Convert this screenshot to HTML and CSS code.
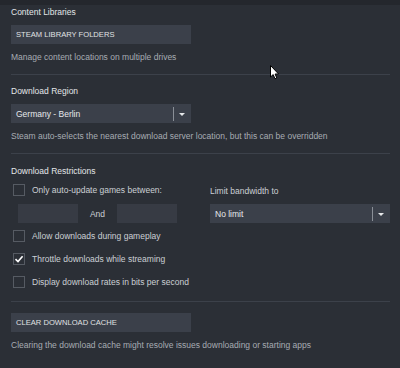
FILE: index.html
```html
<!DOCTYPE html>
<html lang="en">
<head>
  <meta charset="UTF-8">
  <title>Steam Settings - Downloads</title>
  <link rel="stylesheet" href="styles.css">
</head>
<body>
  <div class="topband"></div>
  <div class="page">
    <div class="section">
      <div class="heading">Content Libraries</div>
      <button class="btn">STEAM LIBRARY FOLDERS</button>
      <div class="desc">Manage content locations on multiple drives</div>
    </div>
    <div class="sep"></div>

    <div class="section">
      <div class="heading">Download Region</div>
      <div class="dropdown">
        <span class="value">Germany - Berlin</span>
        <span class="divider"></span>
        <span class="arrow"></span>
      </div>
      <div class="desc">Steam auto-selects the nearest download server location, but this can be overridden</div>
    </div>
    <div class="sep"></div>

    <div class="section">
      <div class="heading heading-r">Download Restrictions</div>
      <div class="restrict">
        <div class="left">
          <label class="check"><span class="box"></span>Only auto-update games between:</label>
          <div class="times">
            <span class="field"></span>
            <span class="and">And</span>
            <span class="field"></span>
          </div>
        </div>
        <div class="right">
          <div class="label">Limit bandwidth to</div>
          <div class="dropdown wide">
            <span class="value">No limit</span>
            <span class="divider"></span>
            <span class="arrow"></span>
          </div>
        </div>
      </div>
      <label class="check"><span class="box"></span>Allow downloads during gameplay</label>
      <label class="check"><span class="box checked">
        <svg width="10" height="10" viewBox="0 0 10 10"><path d="M1.5 5.2 L4 7.6 L8.6 2.2" fill="none" stroke="#fff" stroke-width="1.6"/></svg>
      </span>Throttle downloads while streaming</label>
      <label class="check"><span class="box"></span>Display download rates in bits per second</label>
    </div>
    <div class="sep sep-last"></div>

    <div class="section">
      <button class="btn btn-cache">CLEAR DOWNLOAD CACHE</button>
      <div class="desc">Clearing the download cache might resolve issues downloading or starting apps</div>
    </div>
  </div>

  <svg class="cursor" width="10" height="16" viewBox="0 0 10 16">
    <path d="M0.5 0.5 L0.5 12 L3.2 9.6 L5 13.8 L6.8 13 L5.1 9 L8.6 9 Z" fill="#fff" stroke="#000" stroke-width="1"/>
  </svg>
</body>
</html>
```

FILE: styles.css
```css
body {
  margin: 0;
  background: #2b2f36;
  font-family: "Liberation Sans", Arial, sans-serif;
  font-size: 8.5px;
  color: #dcdedf;
  position: relative;
  height: 368px;
  overflow: hidden;
}

.topband {
  height: 5px;
  background: #24272d;
}

.page {
  padding: 0 10px 0 11px;
}

.heading {
  line-height: 12px;
  margin-top: 1px;
  color: #e3e6e9;
}

.btn {
  display: block;
  margin-top: 7px;
  width: 180px;
  height: 19px;
  padding: 0 0 0 5px;
  border: none;
  background: #3b404a;
  color: #e0e2e4;
  font-family: "Liberation Sans", Arial, sans-serif;
  font-size: 7.6px;
  text-align: left;
}

.desc {
  margin-top: 7px;
  line-height: 12px;
  color: #a7acb3;
}

.sep {
  height: 1px;
  background: #3c414a;
  margin: 11px 0 10px;
}

.dropdown {
  margin-top: 7px;
  width: 180px;
  height: 19px;
  background: #3b404a;
  display: flex;
  align-items: center;
  color: #e6e8eb;
}

.dropdown .value {
  flex: 1;
  padding-left: 5px;
}

.dropdown .divider {
  width: 1px;
  height: 14px;
  background: #8a8f97;
}

.dropdown .arrow {
  width: 0;
  height: 0;
  margin: 1px 6px 0 5px;
  border-left: 3px solid transparent;
  border-right: 3px solid transparent;
  border-top: 3px solid #e6e8ea;
}

.heading-r {
  margin-top: 11px;
}

.restrict {
  display: flex;
}

.left {
  width: 199px;
}

.right {
  padding-top: 8px;
}

.right .label {
  line-height: 12px;
  color: #cbd0d5;
}

.right .dropdown {
  margin-top: 7px;
}

.check {
  display: flex;
  align-items: center;
  height: 12px;
  margin: 7px 0 11px 2px;
  color: #cbd0d5;
}

.restrict .check {
  margin-bottom: 0;
}

.box {
  box-sizing: border-box;
  width: 12px;
  height: 12px;
  border: 1px solid #565b63;
  margin-right: 7px;
  display: flex;
  align-items: center;
  justify-content: center;
}

.times {
  display: flex;
  align-items: center;
  margin: 8px 0 0 7px;
}

.field {
  width: 60px;
  height: 19px;
  background: #373b44;
}

.and {
  width: 39px;
  text-align: center;
  color: #cbd0d5;
}

.sep-last {
  margin: 13px 0 11px;
}

.btn-cache {
  margin-top: 0;
}

.cursor {
  position: absolute;
  left: 270px;
  top: 65px;
}
```
